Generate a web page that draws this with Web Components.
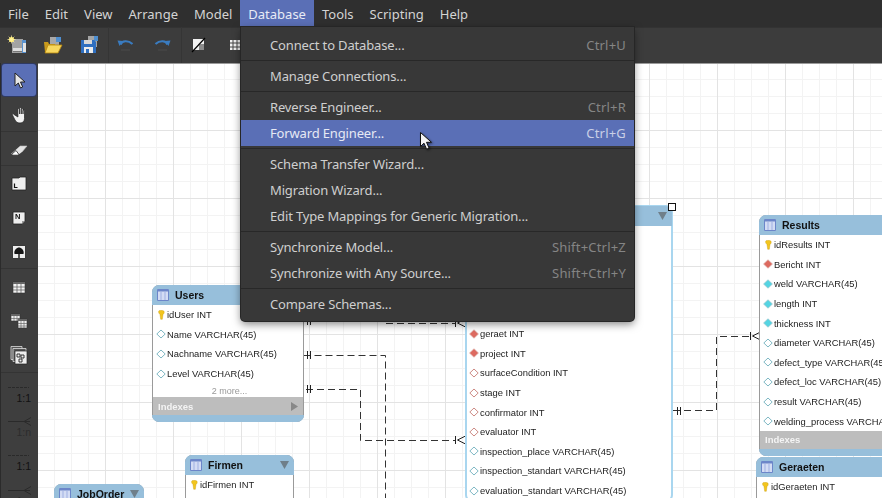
<!DOCTYPE html>
<html>
<head>
<meta charset="utf-8">
<title>MySQL Workbench</title>
<style>
  html, body { margin: 0; height: 100%; overflow: hidden; background: #3c3c3c; }
</style>
</head>
<body>
<wb-app>
  <wb-menubar slot="menubar">
    <wb-menu-title>File</wb-menu-title>
    <wb-menu-title>Edit</wb-menu-title>
    <wb-menu-title>View</wb-menu-title>
    <wb-menu-title>Arrange</wb-menu-title>
    <wb-menu-title>Model</wb-menu-title>
    <wb-menu-title open>Database</wb-menu-title>
    <wb-menu-title>Tools</wb-menu-title>
    <wb-menu-title>Scripting</wb-menu-title>
    <wb-menu-title>Help</wb-menu-title>
  </wb-menubar>

  <wb-toolbar slot="toolbar">
    <wb-icon name="new"></wb-icon>
    <wb-icon name="open"></wb-icon>
    <wb-icon name="save"></wb-icon>
    <wb-toolbar-sep></wb-toolbar-sep>
    <wb-icon name="undo"></wb-icon>
    <wb-icon name="redo"></wb-icon>
    <wb-toolbar-sep></wb-toolbar-sep>
    <wb-icon name="toggle"></wb-icon>
    <wb-icon name="grid"></wb-icon>
  </wb-toolbar>

  <wb-toolbox slot="toolbox">
    <wb-tool selected><wb-icon name="arrow"></wb-icon></wb-tool>
    <wb-tool><wb-icon name="hand"></wb-icon></wb-tool>
    <wb-tool sep><wb-icon name="eraser"></wb-icon></wb-tool>
    <wb-tool sep><wb-icon name="layer"></wb-icon></wb-tool>
    <wb-tool><wb-icon name="note"></wb-icon></wb-tool>
    <wb-tool><wb-icon name="image"></wb-icon></wb-tool>
    <wb-tool sep><wb-icon name="table"></wb-icon></wb-tool>
    <wb-tool><wb-icon name="tables"></wb-icon></wb-tool>
    <wb-tool><wb-icon name="routines"></wb-icon></wb-tool>
    <wb-rel-tool sep kind="one">1:1</wb-rel-tool>
    <wb-rel-tool kind="many" dim>1:n</wb-rel-tool>
    <wb-rel-tool kind="one">1:1</wb-rel-tool>
    <wb-rel-tool kind="many" dim>1:n</wb-rel-tool>
  </wb-toolbox>

  <er-canvas slot="canvas">
    <er-links></er-links>

    <er-table x="152" y="285" w="152" title="Users" indexes>
      <er-field kind="key">idUser INT</er-field>
      <er-field kind="open">Name VARCHAR(45)</er-field>
      <er-field kind="open">Nachname VARCHAR(45)</er-field>
      <er-field kind="open">Level VARCHAR(45)</er-field>
      <er-field kind="more">2 more...</er-field>
    </er-table>

    <er-table x="185" y="455" w="109" title="Firmen" arrow>
      <er-field kind="key">idFirmen INT</er-field>
      <er-field kind="blank"></er-field>
    </er-table>

    <er-table x="54" y="484" w="90" title="JobOrder" arrow>
      <er-field kind="blank"></er-field>
    </er-table>

    <er-table x="465" y="205" w="208" arrow selected>
      <er-field kind="blank"></er-field>
      <er-field kind="blank"></er-field>
      <er-field kind="blank"></er-field>
      <er-field kind="blank"></er-field>
      <er-field kind="blank"></er-field>
      <er-field kind="fk">geraet INT</er-field>
      <er-field kind="fk">project INT</er-field>
      <er-field kind="red">surfaceCondition INT</er-field>
      <er-field kind="red">stage INT</er-field>
      <er-field kind="red">confirmator INT</er-field>
      <er-field kind="red">evaluator INT</er-field>
      <er-field kind="open">inspection_place VARCHAR(45)</er-field>
      <er-field kind="open">inspection_standart VARCHAR(45)</er-field>
      <er-field kind="open">evaluation_standart VARCHAR(45)</er-field>
    </er-table>

    <er-table x="759" y="215" w="160" title="Results" indexes>
      <er-field kind="key">idResults INT</er-field>
      <er-field kind="fk">Bericht INT</er-field>
      <er-field kind="cyan">weld VARCHAR(45)</er-field>
      <er-field kind="cyan">length INT</er-field>
      <er-field kind="cyan">thickness INT</er-field>
      <er-field kind="open">diameter VARCHAR(45)</er-field>
      <er-field kind="open">defect_type VARCHAR(45)</er-field>
      <er-field kind="open">defect_loc VARCHAR(45)</er-field>
      <er-field kind="open">result VARCHAR(45)</er-field>
      <er-field kind="open">welding_process VARCHAR(45)</er-field>
    </er-table>

    <er-table x="756" y="457" w="160" title="Geraeten">
      <er-field kind="key">idGeraeten INT</er-field>
      <er-field kind="blank"></er-field>
    </er-table>
  </er-canvas>

  <wb-menu slot="overlay">
    <wb-menu-item shortcut="Ctrl+U">Connect to Database...</wb-menu-item>
    <wb-menu-sep></wb-menu-sep>
    <wb-menu-item>Manage Connections...</wb-menu-item>
    <wb-menu-sep></wb-menu-sep>
    <wb-menu-item shortcut="Ctrl+R">Reverse Engineer...</wb-menu-item>
    <wb-menu-item shortcut="Ctrl+G" active>Forward Engineer...</wb-menu-item>
    <wb-menu-sep></wb-menu-sep>
    <wb-menu-item>Schema Transfer Wizard...</wb-menu-item>
    <wb-menu-item>Migration Wizard...</wb-menu-item>
    <wb-menu-item>Edit Type Mappings for Generic Migration...</wb-menu-item>
    <wb-menu-sep></wb-menu-sep>
    <wb-menu-item shortcut="Shift+Ctrl+Z">Synchronize Model...</wb-menu-item>
    <wb-menu-item shortcut="Shift+Ctrl+Y">Synchronize with Any Source...</wb-menu-item>
    <wb-menu-sep></wb-menu-sep>
    <wb-menu-item>Compare Schemas...</wb-menu-item>
  </wb-menu>
  <wb-cursor slot="overlay"></wb-cursor>
</wb-app>

<script>
// every icon is drawn on a 20x20 box, centred in its slot
const ICONS = {
  new: `<path d="M5 4h11v14H5z" fill="#a3a3a3"/><path d="M15 5h4v13h-4z" fill="#5a93cf"/><path d="M16 8h3v9h-3z" fill="#e4e4e4"/><path d="M6 13h9v4H6z" fill="#dedede"/><path d="M6 16h9v1H6z" fill="#777"/><circle cx="4.500" cy="4.500" r="2.600" fill="#ffe96a"/><path d="M4.500 .5v8M.5 4.500h8M1.700 1.700l5.600 5.600M7.300 1.700l-5.600 5.600" stroke="#fff3a0" stroke-width=".7"/>`,
  open: `<path d="M7 2h9v8H7z" fill="#a8a8a8"/><path d="M13 2h5v5h-5z" fill="#4f8fd0"/><path d="M1 7h4l1 2h6v8H2z" fill="#c99a1c"/><path d="M2 18 5 10h14l-4 8z" fill="#f7d75e" stroke="#b8860b" stroke-width=".8"/>`,
  save: `<path d="M9 1h9v11H9z" fill="#a5a5a5"/><path d="M15 1h4v5h-4z" fill="#4f8fd0"/><path d="M2 5h13l2 2v11H2z" fill="#2f6fc0"/><path d="M5 5h8v4H5z" fill="#d8d8d8"/><path d="M5 12h9v6H5z" fill="#ececec"/><path d="M7 14h3v4H7z" fill="#2f6fc0"/>`,
  undo: `<path d="M4.500 9.500C6 5.500 12 5 16.500 9" fill="none" stroke="#3a7cc0" stroke-width="2.200"/><path d="M1.500 5.500 7 6 3.500 11z" fill="#3a7cc0"/><path d="M5 15h9" stroke="#4a4a4a"/>`,
  redo: `<path d="M15.500 9.500C14 5.500 8 5 3.500 9" fill="none" stroke="#3a7cc0" stroke-width="2.200"/><path d="M18.500 5.500 13 6l3.500 5z" fill="#3a7cc0"/><path d="M6 15h9" stroke="#4a4a4a"/>`,
  toggle: `<path d="M4 4h11v11H4z" fill="#f2f2f2"/><path d="M10 9h5v6h-5z" fill="#8c8c8c"/><path d="M3 17 16 3" stroke="#000" stroke-width="1.200"/>`,
  grid: `<path d="M5 5h10v10H5z" fill="#f2f2f2"/><path d="M8 5v10M12 5v10M5 8h10M5 12h10" stroke="#444" stroke-width="1"/>`,
  arrow: `<path d="M6 3v13l3.300-3 2.200 5 2.200-1-2.200-5H16z" fill="#e6e6e6" stroke="#222" stroke-width="1"/>`,
  hand: `<path d="M5 9.500c-1-1.500-2-.5-1.500.5l2.500 5c1 2 2.500 3 5 3 3 0 4.500-2 4.500-4.500V6c0-1.300-1.500-1.300-1.500 0V9V4.500c0-1.300-1.700-1.300-1.700 0V9V3.500c0-1.300-1.700-1.300-1.700 0V9V4.500c0-1.300-1.700-1.300-1.700 0V12z" fill="#f2f2f2" stroke="#222" stroke-width=".7"/>`,
  eraser: `<path d="M2 15 11 7h7l-5 6-4 3H4z" fill="#e4e4e4"/><path d="M2.500 15.500 7 11.500l3 4-1 .7H4z" fill="#fff" stroke="#222" stroke-width=".8"/><path d="M11 7h7l-5 6" fill="none" stroke="#bbb" stroke-width=".6"/>`,
  layer: `<path d="M3 5h7l1-1h6v13H3z" fill="#eee" stroke="#222" stroke-width=".8"/><path d="M5.500 10.500v4h3" fill="none" stroke="#111" stroke-width="1.200"/>`,
  note: `<path d="M4 4h12v9l-3 3H4z" fill="#eee" stroke="#222" stroke-width=".8"/><path d="M13 16v-3h3z" fill="#999"/><text x="6" y="11" font-family="Liberation Sans" font-weight="700" font-size="7.500" fill="#111">N</text>`,
  image: `<path d="M3.500 3.500h13v13h-13z" fill="#eee" stroke="#222" stroke-width=".8"/><path d="M5.500 12C4.500 8 8 5.500 10 5.500s5.500 2.500 4.500 6.500z" fill="#161616"/><path d="M9.300 11h1.400v5H9.300z" fill="#161616"/>`,
  table: `<path d="M4 5h12v11H4z" fill="#f2f2f2" stroke="#333" stroke-width=".6"/><path d="M4 5h12v2H4z" fill="#666"/><path d="M8 7v9M12 7v9M4 10h12M4 13h12" stroke="#555" stroke-width=".7"/>`,
  tables: `<path d="M2 3h9v7H2z" fill="#eee" stroke="#333" stroke-width=".6"/><path d="M2 3h9v2H2z" fill="#666"/><path d="M5 5v5M8 5v5M2 7.500h9" stroke="#555" stroke-width=".6"/><path d="M9 8h9v9H9z" fill="#eee" stroke="#333" stroke-width=".6"/><path d="M9 8h9v2H9z" fill="#666"/><path d="M12 10v7M15 10v7M9 12.500h9M9 15h9" stroke="#555" stroke-width=".6"/>`,
  routines: `<path d="M2 1.500h11v13H2z" fill="#555" stroke="#ddd" stroke-width=".8"/><path d="M4 3.500h13v13H4z" fill="#555" stroke="#ddd" stroke-width=".8"/><path d="M6 6h12v13H6z" fill="#eee" stroke="#222" stroke-width=".7"/><path d="M8 9h3v3H8zM12 10h3v3h-3zM10 14h3v3h-3z" fill="none" stroke="#222" stroke-width=".9"/>`
};

class WbIcon extends HTMLElement {
  constructor() {
    super();
    this.attachShadow({ mode: "open" });
    const name = this.getAttribute('name');
    this.shadowRoot.innerHTML = `
      <style>
        :host { display: block; width: 20px; height: 20px; }
        svg { display: block; filter: blur(.2px); }
      </style>
      <svg width="20" height="20" viewBox="0 0 20 20">${ICONS[name] || ''}</svg>`;
  }
}
customElements.define("wb-icon", WbIcon);

class WbApp extends HTMLElement {
  constructor() {
    super();
    this.attachShadow({ mode: "open" });
    this.shadowRoot.innerHTML = `
      <style>
        :host {
          display: grid;
          position: relative;
          width: 882px;
          height: 498px;
          overflow: hidden;
          grid-template: 27px 36px 1fr / 38px 1fr;
          grid-template-areas: "menu menu" "bar bar" "box canvas";
          font-family: "Noto Sans", sans-serif;
        }
        .menu { grid-area: menu; display: block; }
        .bar { grid-area: bar; display: block; }
        .box { grid-area: box; display: block; min-height: 0; }
        .canvas { grid-area: canvas; display: block; min-height: 0; }
      </style>
      <div class="menu"><slot name="menubar"></slot></div>
      <div class="bar"><slot name="toolbar"></slot></div>
      <div class="box"><slot name="toolbox"></slot></div>
      <div class="canvas"><slot name="canvas"></slot></div>
      <slot name="overlay"></slot>`;
  }
}
customElements.define("wb-app", WbApp);

class WbMenubar extends HTMLElement {
  constructor() {
    super();
    this.attachShadow({ mode: "open" });
    this.shadowRoot.innerHTML = `
      <style>
        :host { display: flex; height: 27px; background: #2f2f2f; }
      </style>
      <slot></slot>`;
  }
}
customElements.define("wb-menubar", WbMenubar);

class WbMenuTitle extends HTMLElement {
  constructor() {
    super();
    this.attachShadow({ mode: "open" });
    this.shadowRoot.innerHTML = `
      <style>
        :host {
          display: flex;
          align-items: center;
          padding: 0 8px;
          font-size: 13px;
          color: #d4d4d4;
          white-space: nowrap;
        }
        :host([open]) { background: #5a6fb6; color: #e8ebf5; }
      </style>
      <slot></slot>`;
  }
}
customElements.define("wb-menu-title", WbMenuTitle);

class WbToolbar extends HTMLElement {
  constructor() {
    super();
    this.attachShadow({ mode: "open" });
    this.shadowRoot.innerHTML = `
      <style>
        :host {
          display: flex;
          align-items: center;
          height: 36px;
          padding-left: 7px;
          gap: 16px;
          background: #3c3c3c;
          box-shadow: inset 0 1px 0 #333;
        }
      </style>
      <slot></slot>`;
  }
}
customElements.define("wb-toolbar", WbToolbar);

class WbToolbarSep extends HTMLElement {
  constructor() {
    super();
    this.attachShadow({ mode: "open" });
    this.shadowRoot.innerHTML = `
      <style>
        :host { display: block; width: 1px; height: 36px; background: #353535; margin: 0 -9px 0 -7px; }
      </style>`;
  }
}
customElements.define("wb-toolbar-sep", WbToolbarSep);

class WbToolbox extends HTMLElement {
  constructor() {
    super();
    this.attachShadow({ mode: "open" });
    this.shadowRoot.innerHTML = `
      <style>
        :host {
          display: flex;
          flex-direction: column;
          height: 100%;
          box-sizing: border-box;
          background: #3e3e3e;
          border-left: 1px solid #2b2b2b;
          overflow: hidden;
        }
      </style>
      <slot></slot>`;
  }
}
customElements.define("wb-toolbox", WbToolbox);

class WbTool extends HTMLElement {
  constructor() {
    super();
    this.attachShadow({ mode: "open" });
    this.shadowRoot.innerHTML = `
      <style>
        :host {
          display: flex;
          flex: none;
          align-items: center;
          justify-content: center;
          box-sizing: border-box;
          height: 34.4px;
          margin-right: 1px;
        }
        :host([sep]) { box-shadow: 0 -1px 0 #343434; }
        .cell {
          display: flex;
          align-items: center;
          justify-content: center;
          width: 34px;
          height: 32px;
          border-radius: 3px;
        }
        :host([selected]) .cell { background: #5a6fb6; box-shadow: 0 0 0 1px #2f3a63; }
      </style>
      <div class="cell"><slot></slot></div>`;
  }
}
customElements.define("wb-tool", WbTool);

class WbRelTool extends HTMLElement {
  constructor() {
    super();
    this.attachShadow({ mode: "open" });
    const many = this.getAttribute('kind') === 'many';
    this.shadowRoot.innerHTML = `
      <style>
        :host {
          display: block;
          flex: none;
          box-sizing: border-box;
          height: 34.4px;
          padding: 9px 7px 0 7px;
          color: #111;
          font: 10.5px "Liberation Sans", sans-serif;
          text-align: right;
        }
        :host([sep]) { box-shadow: 0 -1px 0 #343434; }
        :host([dim]) { color: #2c2c2c; }
        svg { display: block; margin-bottom: -1px; }
      </style>
      <svg width="23" height="11" viewBox="0 0 23 11">
        <path d="M0 5.500H${many ? 22 : 21}" stroke="#2a2a2a" ${many ? '' : 'stroke-dasharray="3 1"'}/>
        ${many ? '<path d="M23 1.500 16 5.500 23 9.500" fill="none" stroke="#2a2a2a"/>' : ''}
      </svg>
      <slot></slot>`;
  }
}
customElements.define("wb-rel-tool", WbRelTool);

class ErCanvas extends HTMLElement {
  constructor() {
    super();
    this.attachShadow({ mode: "open" });
    this.shadowRoot.innerHTML = `
      <style>
        :host {
          display: block;
          position: relative;
          height: 100%;
          overflow: hidden;
          color: #222;
          font-family: "Liberation Sans", sans-serif;
          background-color: #fff;
          background-image:
            linear-gradient(to right, #e3e3e3 1px, transparent 1px),
            linear-gradient(to bottom, #e3e3e3 1px, transparent 1px),
            linear-gradient(to right, #f3f3f3 1px, transparent 1px),
            linear-gradient(to bottom, #f3f3f3 1px, transparent 1px);
          background-size: 68px 68px, 68px 68px, 17px 17px, 17px 17px;
          background-position: 67px 0, 0 67px, 16px 0, 0 16px;
          box-shadow: inset 0 1px 0 #9a9a9a;
        }
      </style>
      <slot></slot>`;
  }
}
customElements.define("er-canvas", ErCanvas);

class ErLinks extends HTMLElement {
  constructor() {
    super();
    this.attachShadow({ mode: "open" });
    const many = (x, y) => `<path d="M${x} ${y - 4}v8M${x + 10} ${y - 4}l-8 4 8 4" fill="none" stroke="#222"/>`;
    const one = (x, y) => `<path d="M${x} ${y - 4}v8M${x + 3} ${y - 4}v8" stroke="#222"/>`;
    this.shadowRoot.innerHTML = `
      <style>
        :host { display: block; position: absolute; left: 0; top: 0; }
        svg { display: block; }
        .link { fill: none; stroke: #333; stroke-dasharray: 7 4; }
      </style>
      <svg width="844" height="435" viewBox="38 63 844 435">
        <path class="link" d="M303.500 321.500H386M386 323.500H456"/>
        <path class="link" d="M303.500 355.500H385.500V498"/>
        <path class="link" d="M306 389.500H360.500V440.500H456"/>
        <path class="link" d="M673 410.500H716.500V336.500H751"/>
        ${one(307.500, 321)}${one(307.500, 355)}${one(307.500, 389)}${one(677.500, 411)}
        ${many(455.500, 323)}${many(455.500, 440)}${many(750.500, 336)}
      </svg>`;
  }
}
customElements.define("er-links", ErLinks);

class ErTable extends HTMLElement {
  constructor() {
    super();
    this.attachShadow({ mode: "open" });
    const title = this.getAttribute('title') || '';
    const hasArrow = this.hasAttribute('arrow');
    const hasIndexes = this.hasAttribute('indexes');
    this.removeAttribute('title');
    this.style.left = (this.getAttribute('x') - 38) + 'px';
    this.style.top = (this.getAttribute('y') - 63) + 'px';
    this.style.width = this.getAttribute('w') + 'px';
    this.shadowRoot.innerHTML = `
      <style>
        :host {
          display: block;
          position: absolute;
          box-sizing: border-box;
          border-radius: 7px;
          background: #fff;
          border: 1px solid #9a9a9a;
          filter: blur(.25px);
        }
        :host([selected]) { border: 2px solid #a9d6ef; border-radius: 7px; }
        header {
          display: flex;
          align-items: center;
          gap: 6px;
          height: 20px;
          padding: 0 5px;
          margin: -1px -1px 0;
          border-radius: 7px 7px 0 0;
          background: #97bfdb;
          color: #111;
          font-size: 10.5px;
          font-weight: 700;
        }
        .glyph {
          flex: none;
          width: 12px;
          height: 12px;
        }
        .title { flex: 1; }
        .tri { flex: none; }
        .indexes {
          display: flex;
          align-items: center;
          justify-content: space-between;
          height: 18px;
          padding: 0 5px;
          background: #bdbdbd;
          color: #f4f4f4;
          font-size: 9.500px;
          font-weight: 700;
        }
        .foot { height: 7px; margin: 0 -1px -1px; background: #97bfdb; border-radius: 0 0 7px 7px; }
      </style>
      <header>
        <svg class="glyph" viewBox="0 0 12 12">
          <path d="M.5.5h11v11H.5z" fill="#d3dcf4" stroke="#6c86c9"/>
          <path d="M1 1h10v1.500H1z" fill="#6c86c9"/>
          <path d="M4 3v8M8 3v8" stroke="#9fb0e2"/>
        </svg>
        <span class="title">${title}</span>
        ${hasArrow ? '<svg class="tri" width="9" height="8" viewBox="0 0 9 8"><path d="M0 0h9L4.500 8z" fill="#6f7f8a"/></svg>' : ''}
      </header>
      <slot></slot>
      ${hasIndexes ? `
        <div class="indexes">
          <span>Indexes</span>
          <svg width="7" height="9" viewBox="0 0 7 9"><path d="M0 0l7 4.500L0 9z" fill="#888"/></svg>
        </div>
        <div class="foot"></div>` : ''}
      ${this.hasAttribute('selected') ? '<div style="position:absolute;right:-5px;top:-4px;width:6px;height:6px;background:#fff;border:1px solid #111"></div>' : ''}`;
  }
}
customElements.define("er-table", ErTable);

const FIELD_MARKS = {
  key: `<path d="M3 .8C4.300 0 6.700 0 7.800 1c.8 1 .4 2.500-.8 3.500L6.300 9.300H4.700L4 4.500C2.800 3.500 2 1.800 3 .8z" fill="#f2c51e" stroke="#c79a10" stroke-width=".4"/>`,
  fk: `<path d="M5 .8 9.400 5 5 9.200 .6 5z" fill="#dd6a60" stroke="#dba8a2" stroke-width=".8"/>`,
  red: `<path d="M5 1 9.200 5 5 9 .8 5z" fill="#fff" stroke="#cc8a84" stroke-width="1"/>`,
  cyan: `<path d="M5 .8 9.400 5 5 9.200 .6 5z" fill="#55d4e2" stroke="#9cc8d0" stroke-width=".8"/>`,
  open: `<path d="M5 1 9.200 5 5 9 .8 5z" fill="#fff" stroke="#7fb8c4" stroke-width="1"/>`
};

class ErField extends HTMLElement {
  constructor() {
    super();
    this.attachShadow({ mode: "open" });
    const kind = this.getAttribute('kind');
    this.shadowRoot.innerHTML = `
      <style>
        :host {
          display: flex;
          align-items: center;
          gap: 1px;
          height: 19.600px;
          padding-left: 3px;
          font-size: 9.400px;
          white-space: nowrap;
          overflow: hidden;
        }
        :host-context(er-table[selected]) { padding-left: 2px; }
        :host([kind="more"]) {
          justify-content: center;
          height: 14px;
          padding-top: 1px;
          box-sizing: border-box;
          font-size: 9px;
          color: #999;
        }
        svg { flex: none; }
      </style>
      ${kind === 'more' ? '' : `<svg width="10" height="10" viewBox="0 0 10 10">${FIELD_MARKS[kind] || ''}</svg>`}
      <slot></slot>`;
  }
}
customElements.define("er-field", ErField);

class WbMenu extends HTMLElement {
  constructor() {
    super();
    this.attachShadow({ mode: "open" });
    this.shadowRoot.innerHTML = `
      <style>
        :host {
          display: block;
          position: absolute;
          left: 241px;
          top: 27px;
          width: 393px;
          box-sizing: border-box;
          padding: 5px 0 4px;
          background: #383838;
          border-radius: 0 0 4px 4px;
          box-shadow: 0 0 0 1px #262626, 0 3px 9px rgba(0, 0, 0, .5);
        }
      </style>
      <slot></slot>`;
  }
}
customElements.define("wb-menu", WbMenu);

class WbMenuItem extends HTMLElement {
  constructor() {
    super();
    this.attachShadow({ mode: "open" });
    this.shadowRoot.innerHTML = `
      <style>
        :host {
          display: flex;
          align-items: center;
          justify-content: space-between;
          height: 26px;
          padding: 0 8px 0 29px;
          font-size: 13px;
          letter-spacing: -.15px;
          color: #cfcfcf;
          white-space: nowrap;
        }
        :host([active]) { background: #5a6fb6; color: #e6e9f4; }
        .shortcut { color: #858585; letter-spacing: .2px; }
        :host([active]) .shortcut { color: #c9cfe6; }
      </style>
      <span><slot></slot></span>
      <span class="shortcut">${this.getAttribute('shortcut') || ''}</span>`;
  }
}
customElements.define("wb-menu-item", WbMenuItem);

class WbMenuSep extends HTMLElement {
  constructor() {
    super();
    this.attachShadow({ mode: "open" });
    this.shadowRoot.innerHTML = `
      <style>
        :host { display: flex; align-items: center; height: 5px; }
        div { flex: 1; height: 1px; background: #282828; }
      </style>
      <div></div>`;
  }
}
customElements.define("wb-menu-sep", WbMenuSep);

class WbCursor extends HTMLElement {
  constructor() {
    super();
    this.attachShadow({ mode: "open" });
    this.shadowRoot.innerHTML = `
      <style>
        :host { display: block; position: absolute; left: 419px; top: 131px; width: 16px; height: 21px; }
        svg { display: block; filter: drop-shadow(1px 1px 1px rgba(0,0,0,.5)); }
      </style>
      <svg width="16" height="21" viewBox="0 0 16 21">
        <path d="M1.500 1.500v14l3.500-3.300 2.600 6 2.500-1.100-2.600-5.800h5z" fill="#f4f4f4" stroke="#111"/>
      </svg>`;
  }
}
customElements.define("wb-cursor", WbCursor);
</script>
</body>
</html>
